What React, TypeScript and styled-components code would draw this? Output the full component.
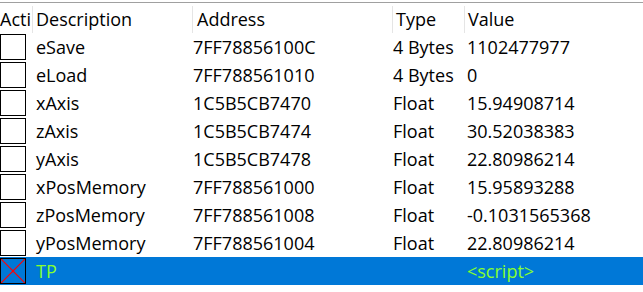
import React from "react";
import styled, { createGlobalStyle } from "styled-components";

const Global = createGlobalStyle`
  html, body { margin: 0; padding: 0; background: #ffffff; }
  body { font-family: "Open Sans", "Noto Sans", sans-serif; }
`;

const COLS = "32px 160px 200px 72px 1fr";

const List = styled.div`
  width: 643px;
  height: 292px;
  background: #ffffff;
  overflow: hidden;
  padding-top: 2px;
  box-sizing: border-box;
`;

const Header = styled.div`
  display: grid;
  grid-template-columns: ${COLS};
  height: 30px;
  border-top: 1px solid #a0a0a0;
`;

const HeadCell = styled.div<{ $pad: number; $first?: boolean }>`
  display: flex;
  align-items: center;
  padding-left: ${(p) => p.$pad}px;
  border-left: ${(p) => (p.$first ? "0" : "1px solid #e5e5e5")};
  margin-top: 3px;
  font-size: 18px;
  color: #000;
  white-space: nowrap;
  overflow: hidden;
  line-height: 1;
  padding-bottom: 2px;
`;

const Row = styled.div<{ $selected?: boolean }>`
  display: grid;
  grid-template-columns: ${COLS};
  height: 28px;
  background: ${(p) => (p.$selected ? "#0078d7" : "transparent")};
  color: ${(p) => (p.$selected ? "#86ff2e" : "#000")};
`;

const Cell = styled.div<{ $pad: number }>`
  display: flex;
  align-items: center;
  padding-left: ${(p) => p.$pad}px;
  font-size: 18px;
  white-space: nowrap;
  overflow: hidden;
`;

const CheckCell = styled.div`
  display: flex;
  align-items: flex-start;
  padding-top: 1px;
`;

const Box = styled.div<{ $script?: boolean }>`
  width: 26px;
  height: 26px;
  box-sizing: border-box;
  border: 1px solid #000;
  background: ${(p) => (p.$script ? "transparent" : "#fff")};
  position: relative;
  svg { position: absolute; left: 0; top: 0; width: 24px; height: 24px; display: block; }
`;

type Entry = { d: string; a: string; t: string; v: string; script?: boolean };

const entries: Entry[] = [
  { d: "eSave", a: "7FF78856100C", t: "4 Bytes", v: "1102477977" },
  { d: "eLoad", a: "7FF788561010", t: "4 Bytes", v: "0" },
  { d: "xAxis", a: "1C5B5CB7470", t: "Float", v: "15.94908714" },
  { d: "zAxis", a: "1C5B5CB7474", t: "Float", v: "30.52038383" },
  { d: "yAxis", a: "1C5B5CB7478", t: "Float", v: "22.80986214" },
  { d: "xPosMemory", a: "7FF788561000", t: "Float", v: "15.95893288" },
  { d: "zPosMemory", a: "7FF788561008", t: "Float", v: "-0.1031565368" },
  { d: "yPosMemory", a: "7FF788561004", t: "Float", v: "22.80986214" },
  { d: "TP", a: "", t: "", v: "<script>", script: true },
];

export default function App() {
  return (
    <>
      <Global />
      <List>
        <Header>
          <HeadCell $pad={0} $first>Acti</HeadCell>
          <HeadCell $pad={3}>Description</HeadCell>
          <HeadCell $pad={4}>Address</HeadCell>
          <HeadCell $pad={3}>Type</HeadCell>
          <HeadCell $pad={3}>Value</HeadCell>
        </Header>
        {entries.map((e) => (
          <Row key={e.d} $selected={e.script}>
            <CheckCell>
              <Box $script={e.script}>
                {e.script && (
                  <svg viewBox="0 0 24 24">
                    <path d="M0 0 L24 24 M24 0 L0 24" stroke="#ff0000" strokeWidth="1.2" fill="none" />
                    <circle cx="12" cy="12" r="1.2" fill="#ff0000" />
                  </svg>
                )}
              </Box>
            </CheckCell>
            <Cell $pad={4}>{e.d}</Cell>
            <Cell $pad={1}>{e.a}</Cell>
            <Cell $pad={1}>{e.t}</Cell>
            <Cell $pad={3}>{e.v}</Cell>
          </Row>
        ))}
      </List>
    </>
  );
}
